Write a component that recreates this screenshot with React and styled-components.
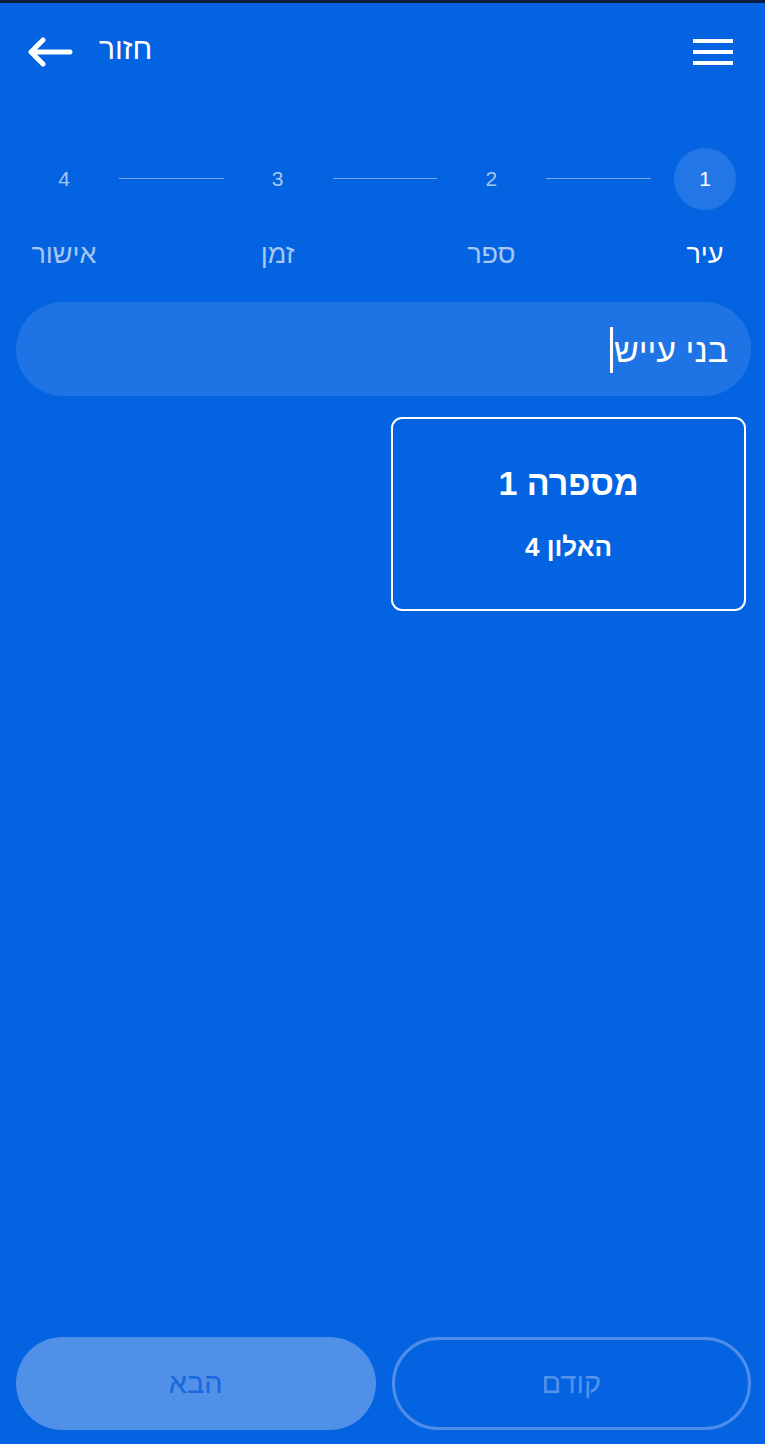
import React, { useState } from "react";
import styled, { createGlobalStyle } from "styled-components";

const GlobalStyle = createGlobalStyle`
  html, body {
    margin: 0;
    padding: 0;
    background: #0363e1;
  }
  * {
    box-sizing: border-box;
  }
`;

const steps = [
  { num: 1, label: "עיר" },
  { num: 2, label: "ספר" },
  { num: 3, label: "זמן" },
  { num: 4, label: "אישור" },
];

const shops = [{ id: 1, name: "מספרה 1", address: "האלון 4" }];

function App() {
  const [city, setCity] = useState("בני עייש");
  const active = 1;

  return (
    <Page dir="rtl">
      <GlobalStyle />
      <Header>
        <MenuButton aria-label="menu">
          <MenuLine />
          <MenuLine />
          <MenuLine />
        </MenuButton>
        <BackButton>
          <BackText>חזור</BackText>
          <svg width="46" height="30" viewBox="0 0 46 30" fill="none">
            <path
              d="M43 15H4M16 3L4 15l12 12"
              stroke="#fff"
              strokeWidth="5"
              strokeLinecap="round"
              strokeLinejoin="round"
            />
          </svg>
        </BackButton>
      </Header>

      <Stepper>
        {steps.map((s, i) => (
          <React.Fragment key={s.num}>
            <Step>
              <StepCircle $active={s.num === active}>{s.num}</StepCircle>
              <StepLabel $active={s.num === active}>{s.label}</StepLabel>
            </Step>
            {i < steps.length - 1 && <Connector />}
          </React.Fragment>
        ))}
      </Stepper>

      <SearchWrap>
        <SearchInput value={city} onChange={(e) => setCity(e.target.value)} />
        <Caret />
      </SearchWrap>

      <ShopGrid>
        {shops.map((shop) => (
          <ShopCard key={shop.id}>
            <ShopName>{shop.name}</ShopName>
            <ShopAddress>{shop.address}</ShopAddress>
          </ShopCard>
        ))}
      </ShopGrid>

      <Footer>
        <OutlineBtn>קודם</OutlineBtn>
        <FilledBtn>הבא</FilledBtn>
      </Footer>
    </Page>
  );
}

const Page = styled.div`
  min-height: 1444px;
  display: flex;
  flex-direction: column;
  background: #0363e1;
  border-top: 3px solid #0b1d3c;
  font-family: "Liberation Sans", "DejaVu Sans", sans-serif;
  color: #fff;
`;

const Header = styled.div`
  height: 94px;
  display: flex;
  align-items: center;
  justify-content: space-between;
  padding: 0 32px 0 27px;
`;

const MenuButton = styled.div`
  width: 40px;
  display: flex;
  flex-direction: column;
  gap: 7.5px;
  margin-top: 4px;
`;

const MenuLine = styled.div`
  height: 3.5px;
  background: #fff;
`;

const BackButton = styled.div`
  display: flex;
  align-items: center;
  gap: 26px;
  margin-top: 4px;
`;

const BackText = styled.span`
  font-size: 30px;
  line-height: 1;
  margin-top: -6px;
`;

const Stepper = styled.div`
  display: flex;
  align-items: flex-start;
  padding: 51px 29px 0 33px;
`;

const Step = styled.div`
  width: 62px;
  display: flex;
  flex-direction: column;
  align-items: center;
`;

const StepCircle = styled.div`
  width: 62px;
  height: 62px;
  border-radius: 50%;
  display: flex;
  align-items: center;
  justify-content: center;
  font-size: 21px;
  background: ${(p) => (p.$active ? "#2376e6" : "transparent")};
  color: ${(p) => (p.$active ? "#fff" : "#a8c6f2")};
`;

const StepLabel = styled.div`
  margin-top: 29px;
  white-space: nowrap;
  font-size: 27px;
  line-height: 30px;
  color: ${(p) => (p.$active ? "#fff" : "#a8c6f2")};
`;

const Connector = styled.div`
  flex: 1;
  height: 1px;
  margin: 30px 23px 0 24px;
  background: #7aa9ee;
`;

const SearchWrap = styled.div`
  position: relative;
  margin: 33px 14px 0 16px;
`;

const SearchInput = styled.input`
  width: 100%;
  height: 94px;
  border: none;
  outline: none;
  border-radius: 47px;
  background: #1f74e5;
  color: #fff;
  font-family: "Liberation Sans", "DejaVu Sans", sans-serif;
  font-size: 34px;
  padding: 2px 23px 0 24px;
  caret-color: transparent;
`;

const Caret = styled.div`
  position: absolute;
  top: 25px;
  left: 594px;
  width: 3px;
  height: 46px;
  background: #fff;
`;

const ShopGrid = styled.div`
  display: grid;
  grid-template-columns: 1fr 1fr;
  gap: 20px;
  margin: 21px 19px 0 16px;
`;

const ShopCard = styled.div`
  height: 194px;
  border: 2px solid #fff;
  border-radius: 11px;
  display: flex;
  flex-direction: column;
  align-items: center;
  padding-top: 44px;
`;

const ShopName = styled.div`
  font-size: 34px;
  font-weight: 700;
  line-height: 40px;
`;

const ShopAddress = styled.div`
  margin-top: 29px;
  font-size: 26px;
  font-weight: 700;
  line-height: 30px;
`;

const Footer = styled.div`
  margin-top: auto;
  display: grid;
  grid-template-columns: 1fr 1fr;
  gap: 16px;
  padding: 0 14px 14px 16px;
`;

const buttonBase = `
  height: 93px;
  border-radius: 47px;
  font-family: "Liberation Sans", "DejaVu Sans", sans-serif;
  font-size: 29px;
  display: flex;
  align-items: center;
  justify-content: center;
`;

const OutlineBtn = styled.button`
  ${buttonBase}
  background: transparent;
  border: 3px solid #4f8de9;
  color: #5592ea;
`;

const FilledBtn = styled.button`
  ${buttonBase}
  background: #5190e9;
  border: none;
  color: #1967dc;
`;

export default App;
